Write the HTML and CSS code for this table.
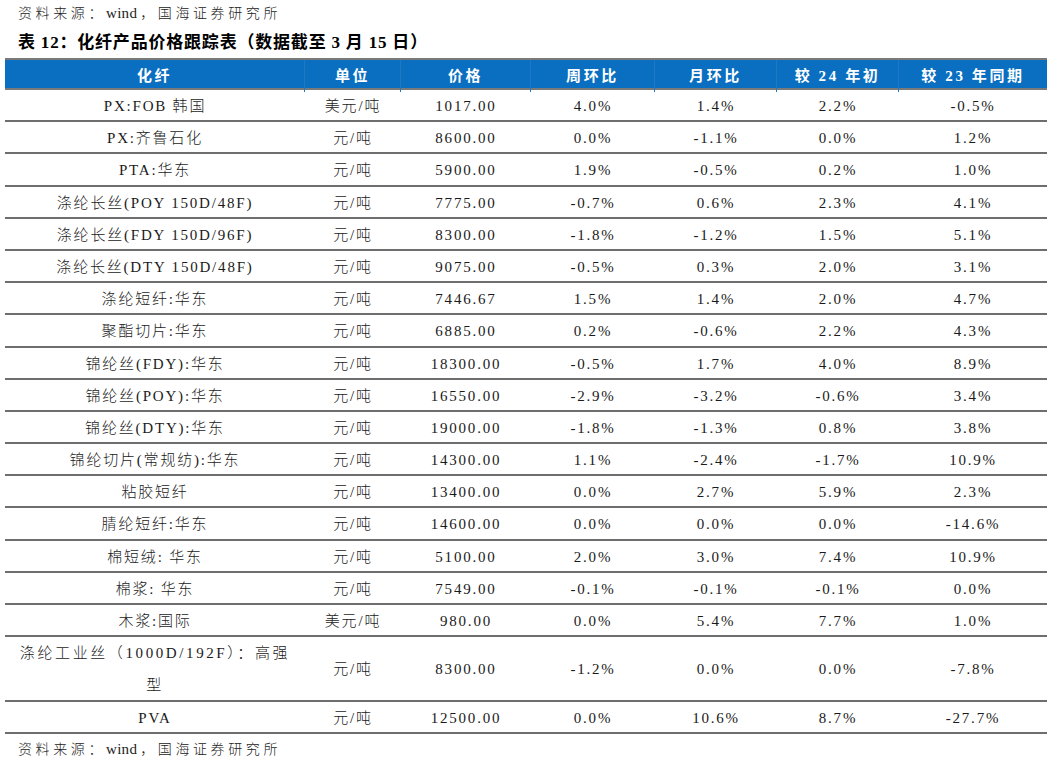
FILE: index.html
```html
<!DOCTYPE html>
<html lang="zh-CN">
<head>
<meta charset="utf-8">
<title>化纤产品价格跟踪表</title>
<link rel="stylesheet" href="styles.css">
</head>
<body>
<div class="page">
  <div class="src">资料来源：<span class="lat">wind</span>，国海证券研究所</div>
  <div class="title">表 12：化纤产品价格跟踪表（数据截至 3 月 15 日）</div>
  <div class="table">
    <div class="row head">
      <div class="cell">化纤</div><div class="cell">单位</div><div class="cell">价格</div><div class="cell">周环比</div><div class="cell">月环比</div><div class="cell">较 24 年初</div><div class="cell">较 23 年同期</div>
    </div>
    <div class="row"><div class="cell">PX:FOB 韩国</div><div class="cell">美元/吨</div><div class="cell">1017.00</div><div class="cell">4.0%</div><div class="cell">1.4%</div><div class="cell">2.2%</div><div class="cell">-0.5%</div></div>
    <div class="row"><div class="cell">PX:齐鲁石化</div><div class="cell">元/吨</div><div class="cell">8600.00</div><div class="cell">0.0%</div><div class="cell">-1.1%</div><div class="cell">0.0%</div><div class="cell">1.2%</div></div>
    <div class="row"><div class="cell">PTA:华东</div><div class="cell">元/吨</div><div class="cell">5900.00</div><div class="cell">1.9%</div><div class="cell">-0.5%</div><div class="cell">0.2%</div><div class="cell">1.0%</div></div>
    <div class="row"><div class="cell">涤纶长丝(POY 150D/48F)</div><div class="cell">元/吨</div><div class="cell">7775.00</div><div class="cell">-0.7%</div><div class="cell">0.6%</div><div class="cell">2.3%</div><div class="cell">4.1%</div></div>
    <div class="row"><div class="cell">涤纶长丝(FDY 150D/96F)</div><div class="cell">元/吨</div><div class="cell">8300.00</div><div class="cell">-1.8%</div><div class="cell">-1.2%</div><div class="cell">1.5%</div><div class="cell">5.1%</div></div>
    <div class="row"><div class="cell">涤纶长丝(DTY 150D/48F)</div><div class="cell">元/吨</div><div class="cell">9075.00</div><div class="cell">-0.5%</div><div class="cell">0.3%</div><div class="cell">2.0%</div><div class="cell">3.1%</div></div>
    <div class="row"><div class="cell">涤纶短纤:华东</div><div class="cell">元/吨</div><div class="cell">7446.67</div><div class="cell">1.5%</div><div class="cell">1.4%</div><div class="cell">2.0%</div><div class="cell">4.7%</div></div>
    <div class="row"><div class="cell">聚酯切片:华东</div><div class="cell">元/吨</div><div class="cell">6885.00</div><div class="cell">0.2%</div><div class="cell">-0.6%</div><div class="cell">2.2%</div><div class="cell">4.3%</div></div>
    <div class="row"><div class="cell">锦纶丝(FDY):华东</div><div class="cell">元/吨</div><div class="cell">18300.00</div><div class="cell">-0.5%</div><div class="cell">1.7%</div><div class="cell">4.0%</div><div class="cell">8.9%</div></div>
    <div class="row"><div class="cell">锦纶丝(POY):华东</div><div class="cell">元/吨</div><div class="cell">16550.00</div><div class="cell">-2.9%</div><div class="cell">-3.2%</div><div class="cell">-0.6%</div><div class="cell">3.4%</div></div>
    <div class="row"><div class="cell">锦纶丝(DTY):华东</div><div class="cell">元/吨</div><div class="cell">19000.00</div><div class="cell">-1.8%</div><div class="cell">-1.3%</div><div class="cell">0.8%</div><div class="cell">3.8%</div></div>
    <div class="row"><div class="cell">锦纶切片(常规纺):华东</div><div class="cell">元/吨</div><div class="cell">14300.00</div><div class="cell">1.1%</div><div class="cell">-2.4%</div><div class="cell">-1.7%</div><div class="cell">10.9%</div></div>
    <div class="row"><div class="cell">粘胶短纤</div><div class="cell">元/吨</div><div class="cell">13400.00</div><div class="cell">0.0%</div><div class="cell">2.7%</div><div class="cell">5.9%</div><div class="cell">2.3%</div></div>
    <div class="row"><div class="cell">腈纶短纤:华东</div><div class="cell">元/吨</div><div class="cell">14600.00</div><div class="cell">0.0%</div><div class="cell">0.0%</div><div class="cell">0.0%</div><div class="cell">-14.6%</div></div>
    <div class="row"><div class="cell">棉短绒: 华东</div><div class="cell">元/吨</div><div class="cell">5100.00</div><div class="cell">2.0%</div><div class="cell">3.0%</div><div class="cell">7.4%</div><div class="cell">10.9%</div></div>
    <div class="row"><div class="cell">棉浆: 华东</div><div class="cell">元/吨</div><div class="cell">7549.00</div><div class="cell">-0.1%</div><div class="cell">-0.1%</div><div class="cell">-0.1%</div><div class="cell">0.0%</div></div>
    <div class="row"><div class="cell">木浆:国际</div><div class="cell">美元/吨</div><div class="cell">980.00</div><div class="cell">0.0%</div><div class="cell">5.4%</div><div class="cell">7.7%</div><div class="cell">1.0%</div></div>
    <div class="row tall"><div class="cell wide">涤纶工业丝（1000D/192F）：高强<br>型</div><div class="cell">元/吨</div><div class="cell">8300.00</div><div class="cell">-1.2%</div><div class="cell">0.0%</div><div class="cell">0.0%</div><div class="cell">-7.8%</div></div>
    <div class="row"><div class="cell">PVA</div><div class="cell">元/吨</div><div class="cell">12500.00</div><div class="cell">0.0%</div><div class="cell">10.6%</div><div class="cell">8.7%</div><div class="cell">-27.7%</div></div>
  </div>
  <div class="src foot">资料来源：<span class="lat">wind</span>，国海证券研究所</div>
</div>
</body>
</html>
```

FILE: styles.css
```css
html, body {
  margin: 0;
  padding: 0;
  background: #ffffff;
}

.page {
  width: 1052px;
  height: 763px;
  padding: 4px 5px 0 5px;
  box-sizing: border-box;
  font-family: "Liberation Serif", "Noto Sans CJK SC", serif;
  color: #1a1a1a;
}

.src {
  margin-left: 13px;
  font-size: 14px;
  line-height: 18px;
  letter-spacing: 3.6px;
  color: #222;
  font-weight: 300;
}

.src .lat {
  font-size: 15px;
  letter-spacing: 0.3px;
  margin-right: 3px;
}

.title {
  margin-left: 13px;
  margin-top: 9px;
  font-size: 17px;
  line-height: 22px;
  font-weight: bold;
  letter-spacing: 0.8px;
  color: #000;
}

.table {
  margin-top: 4px;
  width: 1042px;
}

.row {
  display: grid;
  grid-template-columns: 300px 96px 130px 124px 122px 122px 148px;
  height: 32.2px;
  box-sizing: border-box;
  border-bottom: 2px solid #6e6e6e;
  font-size: 15px;
  letter-spacing: 1.8px;
  font-weight: 300;
}

.row.head {
  height: 32px;
  background: #0a6fc0;
  color: #ffffff;
  font-weight: bold;
  border-top: 2px solid #7a7a7a;
  border-bottom: 2px solid #7a7a7a;
  letter-spacing: 2.6px;
}

.row.tall {
  height: 64.4px;
}

.cell {
  display: flex;
  align-items: center;
  justify-content: center;
  text-align: center;
  white-space: nowrap;
  line-height: 32px;
}

.cell.wide {
  letter-spacing: 2.6px;
}

.head .cell {
  border-right: 1px solid #1f78c4;
}

.head .cell:last-child {
  border-right: none;
}

.foot {
  margin-top: 6px;
}
```
